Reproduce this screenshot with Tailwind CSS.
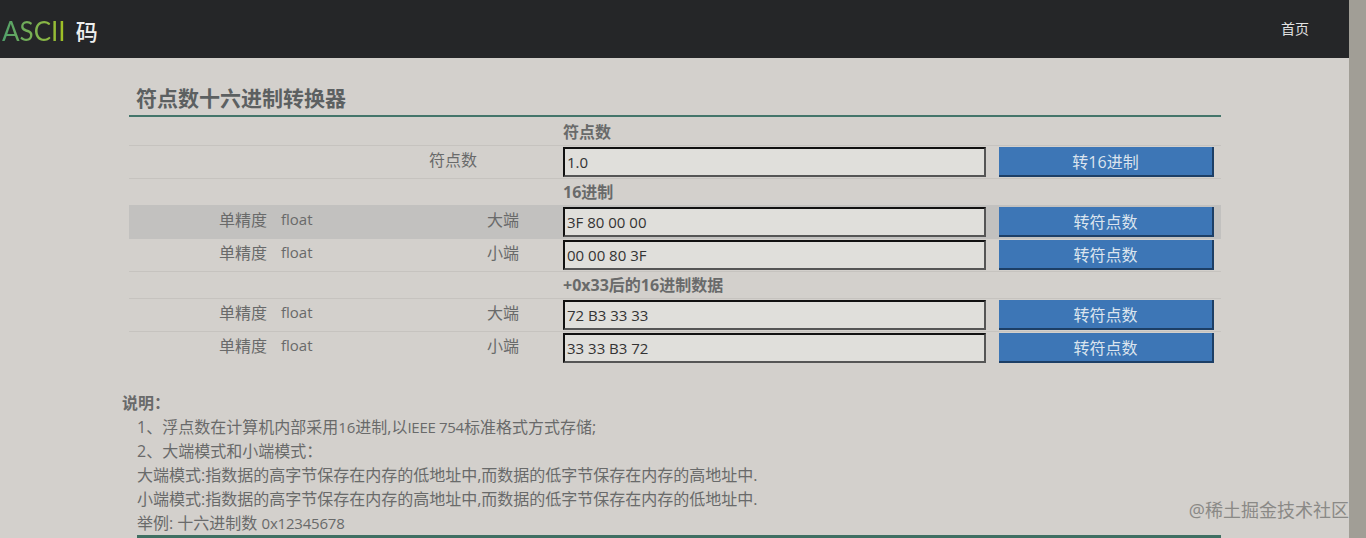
<!DOCTYPE html>
<html lang="zh-CN">
<head>
    <meta charset="UTF-8">
    <title>符点数十六进制转换器</title>
    <script src="https://cdn.jsdelivr.net/npm/@tailwindcss/browser@4"></script>
</head>
<body class="h-[538px] overflow-hidden bg-[#d3d0cc] font-['Open_Sans','Noto_Sans_CJK_SC',sans-serif] text-[16px] text-[#696a6a]">
    <div class="flex h-[538px]">
        <div class="relative w-[1349px] shrink-0">
            <!-- top bar -->
            <header class="flex h-[58px] items-center justify-between bg-[#252628] pl-[2px] pr-[40px]">
                <a class="flex items-center gap-[10px] pt-[5px] font-['Lato','Noto_Sans_CJK_SC',sans-serif] text-[26px]">
                    <span class="bg-gradient-to-r from-[#4f9f6a] to-[#a3c21a] bg-clip-text text-transparent">ASCII</span>
                    <span class="text-[22px] font-medium text-[#eeeeee]">码</span>
                </a>
                <a class="pb-[1px] text-[14px] text-[#e2e2e2]">首页</a>
            </header>

            <main class="pl-[129px] pr-[128px]">
                <h2 class="mt-[25px] h-[34px] border-b-2 border-[#43756a] pl-[7px] text-[21px] leading-[31px] font-bold text-[#5c6061]">符点数十六进制转换器</h2>

                <!-- section: float -->
                <div class="flex h-[28px] items-center pt-[1px] pl-[434px] font-bold">符点数</div>
                <div class="flex h-[34px] items-center border-y border-[#c6c3bf]">
                    <div class="w-[434px] pb-[4px] pl-[300px]">符点数</div>
                    <input class="h-[30px] w-[423px] border-2 border-t-[#111] border-l-[#111] border-r-[#555] border-b-[#555] bg-[#e0dfdb] px-[2px] text-[15px] text-[#333]" value="1.0">
                    <button class="ml-[13px] h-[30px] w-[215px] border-r-2 border-b-2 border-[#1d3f66] bg-[#3d76b6] pt-[2px] text-[#dbe4ee]">转16进制</button>
                </div>

                <!-- section: hex -->
                <div class="flex h-[26px] items-center pl-[434px] font-bold">16进制</div>
                <div class="flex h-[34px] items-center bg-[#c2c1bf]">
                    <div class="flex w-[434px] pb-[4px] pl-[90px]"><span class="w-[62px]">单精度</span><span class="w-[206px] text-[15px]">float</span><span>大端</span></div>
                    <input class="h-[30px] w-[423px] border-2 border-t-[#111] border-l-[#111] border-r-[#555] border-b-[#555] bg-[#e0dfdb] px-[2px] text-[15px] text-[#333]" value="3F 80 00 00">
                    <button class="ml-[13px] h-[30px] w-[215px] border-r-2 border-b-2 border-[#1d3f66] bg-[#3d76b6] pt-[2px] text-[#dbe4ee]">转符点数</button>
                </div>
                <div class="flex h-[33px] items-center border-b border-[#c6c3bf]">
                    <div class="flex w-[434px] pb-[5px] pl-[90px]"><span class="w-[62px]">单精度</span><span class="w-[206px] text-[15px]">float</span><span>小端</span></div>
                    <input class="h-[30px] w-[423px] border-2 border-t-[#111] border-l-[#111] border-r-[#555] border-b-[#555] bg-[#e0dfdb] px-[2px] text-[15px] text-[#333]" value="00 00 80 3F">
                    <button class="ml-[13px] h-[30px] w-[215px] border-r-2 border-b-2 border-[#1d3f66] bg-[#3d76b6] pt-[2px] text-[#dbe4ee]">转符点数</button>
                </div>

                <!-- section: +0x33 -->
                <div class="flex h-[26px] items-center pl-[434px] font-bold">+0x33后的16进制数据</div>
                <div class="flex h-[34px] items-center border-y border-[#c6c3bf]">
                    <div class="flex w-[434px] pb-[4px] pl-[90px]"><span class="w-[62px]">单精度</span><span class="w-[206px] text-[15px]">float</span><span>大端</span></div>
                    <input class="h-[30px] w-[423px] border-2 border-t-[#111] border-l-[#111] border-r-[#555] border-b-[#555] bg-[#e0dfdb] px-[2px] text-[15px] text-[#333]" value="72 B3 33 33">
                    <button class="ml-[13px] h-[30px] w-[215px] border-r-2 border-b-2 border-[#1d3f66] bg-[#3d76b6] pt-[2px] text-[#dbe4ee]">转符点数</button>
                </div>
                <div class="flex h-[32px] items-center">
                    <div class="flex w-[434px] pb-[5px] pl-[90px]"><span class="w-[62px]">单精度</span><span class="w-[206px] text-[15px]">float</span><span>小端</span></div>
                    <input class="h-[30px] w-[423px] border-2 border-t-[#111] border-l-[#111] border-r-[#555] border-b-[#555] bg-[#e0dfdb] px-[2px] text-[15px] text-[#333]" value="33 33 B3 72">
                    <button class="ml-[13px] h-[30px] w-[215px] border-r-2 border-b-2 border-[#1d3f66] bg-[#3d76b6] pt-[2px] text-[#dbe4ee]">转符点数</button>
                </div>

                <!-- notes -->
                <div class="mt-[27px] -ml-[7px] h-[24px] leading-[24px] font-bold">说明：</div>
                <div class="ml-[8px] border-b-[3px] border-[#3f6f62] leading-[24px]">
                    <p class="h-[24px]">1、浮点数在计算机内部采用<span class="text-[15px]">16</span>进制,以<span class="text-[15px] tracking-[-0.3px]">IEEE 754</span>标准格式方式存储;</p>
                    <p class="h-[24px]">2、大端模式和小端模式：</p>
                    <p class="h-[24px]">大端模式:指数据的高字节保存在内存的低地址中,而数据的低字节保存在内存的高地址中.</p>
                    <p class="h-[24px]">小端模式:指数据的高字节保存在内存的高地址中,而数据的低字节保存在内存的低地址中.</p>
                    <p class="h-[24px]">举例: 十六进制数 <span class="text-[15px] tracking-[-0.2px]">0x12345678</span></p>
                </div>
            </main>

            <!-- watermark -->
            <div class="absolute right-0 bottom-[16px] text-[18px] leading-[24px] text-[#8a8986]">@稀土掘金技术社区</div>
        </div>
        <!-- scrollbar -->
        <div class="h-full w-[17px] bg-[#a19e96]"></div>
    </div>
</body>
</html>
